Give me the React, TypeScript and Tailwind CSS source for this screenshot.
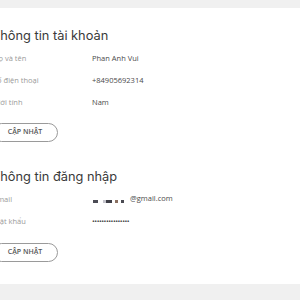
const rows1 = [
  { label: 'Họ và tên', value: 'Phan Anh Vui' },
  { label: 'Số điện thoại', value: '+84905692314' },
  { label: 'Giới tính', value: 'Nam' },
]

function UpdateButton() {
  return (
    <button
      type="button"
      className="flex h-[19px] w-[66px] items-center justify-center rounded-full border border-[#9a9a9a] bg-white text-[7px] font-semibold text-[#555]"
    >
      CẬP NHẬT
    </button>
  )
}

function Row({ label, children }: { label: string; children: React.ReactNode }) {
  return (
    <div className="ml-[1px] flex h-[22px] items-center text-[7.5px]">
      <div className="w-[99px] shrink-0 text-[#9a9a9a]">{label}</div>
      <div className="text-[#4a4a4a]">{children}</div>
    </div>
  )
}

function MaskedEmail() {
  return (
    <div className="flex items-center">
      <div className="flex w-[38px] items-center pt-[3px]">
        <span className="ml-[1px] h-[3px] w-[5px] bg-[#4b4b55]" />
        <span className="ml-[5px] h-[3px] w-[3px] bg-[#c4c4cc]" />
        <span className="h-[3px] w-[6px] bg-[#3f3f48]" />
        <span className="ml-[3px] h-[3px] w-[3px] bg-[#8a6f60]" />
        <span className="ml-[3px] h-[3px] w-[3px] bg-[#4a4a52]" />
      </div>
      <span className="-mt-[3px]">@gmail.com</span>
    </div>
  )
}

export default function App() {
  return (
    <div className="flex h-[300px] w-[300px] flex-col overflow-hidden bg-[#f0f0f0] font-['Open_Sans',sans-serif]">
      <div className="h-[8px] shrink-0" />
      <div className="flex h-[276px] flex-col bg-white">
        <div className="-ml-[8px] flex flex-col">
          <section className="flex flex-col pt-[20px]">
            <h2 className="mb-[4px] font-['Inter',sans-serif] text-[12.8px] leading-[16px] text-[#3a3a3a]">
              Thông tin tài khoản
            </h2>
            {rows1.map((r) => (
              <Row key={r.label} label={r.label}>
                {r.value}
              </Row>
            ))}
            <div className="mt-[9px]">
              <UpdateButton />
            </div>
          </section>

          <section className="flex flex-col pt-[27px]">
            <h2 className="mb-[4px] font-['Inter',sans-serif] text-[12.8px] leading-[16px] text-[#3a3a3a]">
              Thông tin đăng nhập
            </h2>
            <Row label="Email">
              <MaskedEmail />
            </Row>
            <Row label="Mật khẩu">
              <span className="tracking-[-0.5px]">••••••••••••••••</span>
            </Row>
            <div className="mt-[10px]">
              <UpdateButton />
            </div>
          </section>
        </div>
      </div>
    </div>
  )
}
